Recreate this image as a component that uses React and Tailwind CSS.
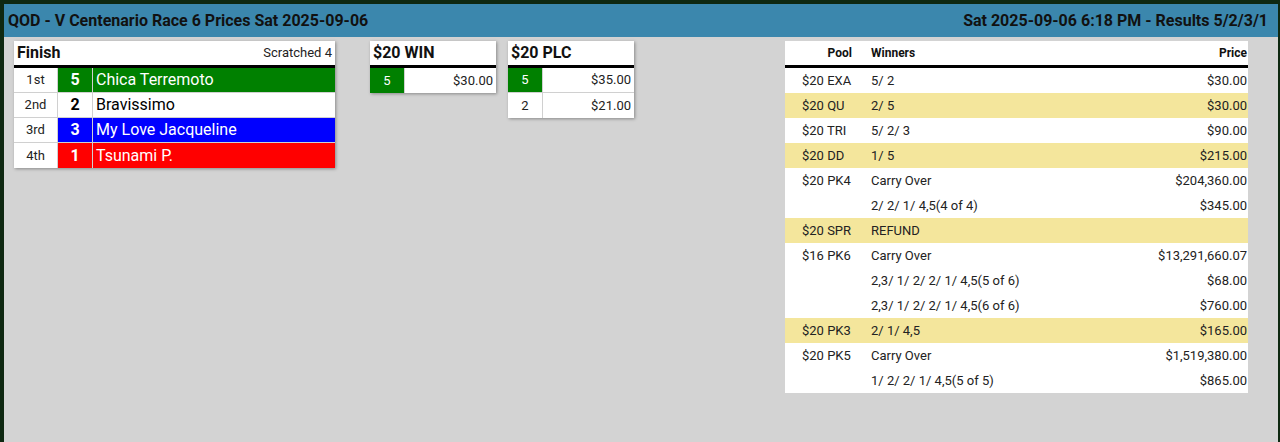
import React from "react";

const finish = [
  { pos: "1st", num: "5", name: "Chica Terremoto", bg: "bg-[#008000]", fg: "text-white" },
  { pos: "2nd", num: "2", name: "Bravissimo", bg: "bg-white", fg: "text-black" },
  { pos: "3rd", num: "3", name: "My Love Jacqueline", bg: "bg-[#0000ff]", fg: "text-white" },
  { pos: "4th", num: "1", name: "Tsunami P.", bg: "bg-[#ff0000]", fg: "text-white" },
];

const results = [
  { pool: "$20 EXA", win: "5/ 2", price: "$30.00" },
  { pool: "$20 QU", win: "2/ 5", price: "$30.00", hl: true },
  { pool: "$20 TRI", win: "5/ 2/ 3", price: "$90.00" },
  { pool: "$20 DD", win: "1/ 5", price: "$215.00", hl: true },
  { pool: "$20 PK4", win: "Carry Over", price: "$204,360.00" },
  { pool: "", win: "2/ 2/ 1/ 4,5(4 of 4)", price: "$345.00" },
  { pool: "$20 SPR", win: "REFUND", price: "", hl: true },
  { pool: "$16 PK6", win: "Carry Over", price: "$13,291,660.07" },
  { pool: "", win: "2,3/ 1/ 2/ 2/ 1/ 4,5(5 of 6)", price: "$68.00" },
  { pool: "", win: "2,3/ 1/ 2/ 2/ 1/ 4,5(6 of 6)", price: "$760.00" },
  { pool: "$20 PK3", win: "2/ 1/ 4,5", price: "$165.00", hl: true },
  { pool: "$20 PK5", win: "Carry Over", price: "$1,519,380.00" },
  { pool: "", win: "1/ 2/ 2/ 1/ 4,5(5 of 5)", price: "$865.00" },
];

function PriceCard({ title, rows, className }) {
  return (
    <div className={`w-[126px] bg-white shadow-[1px_1px_3px_rgba(0,0,0,0.35)] ${className}`}>
      <div className="h-[27px] px-[3px] flex items-center border-b-[3px] border-black text-[16px] font-bold text-[#111]">
        {title}
      </div>
      {rows.map((r, i) => (
        <div key={i} className="flex h-[25px] border-b border-[#d0d0d0] last:border-b-0 text-[13px]">
          <div
            className={`w-[35px] flex items-center justify-center border-r border-[#d0d0d0] ${
              r.first ? "bg-[#008000] text-white" : "text-[#222]"
            }`}
          >
            {r.num}
          </div>
          <div className="flex-1 flex items-center justify-end pr-[3px] text-[#222]">{r.price}</div>
        </div>
      ))}
    </div>
  );
}

export default function App() {
  return (
    <div
      className="w-[1280px] h-[442px] bg-[#0e2811] pt-[4px] pl-[4px] pr-[2px] overflow-hidden"
      style={{ fontFamily: "Roboto, 'Liberation Sans', sans-serif" }}
    >
      <div className="h-full bg-[#d3d3d3] flex flex-col">
        <div className="h-[33px] bg-[#3b87ad] flex items-center justify-between pl-[4px] pr-[10px] text-[16px] font-bold text-[#111]">
          <span>QOD - V Centenario Race 6 Prices Sat 2025-09-06</span>
          <span>Sat 2025-09-06 6:18 PM - Results 5/2/3/1</span>
        </div>

        <div className="flex items-start pt-[4px] pl-[10px]">
          <div className="w-[321px] bg-white shadow-[1px_1px_3px_rgba(0,0,0,0.35)]">
            <div className="h-[27px] px-[3px] flex items-center justify-between border-b-[3px] border-black">
              <span className="text-[16px] font-bold text-[#111]">Finish</span>
              <span className="text-[13px] text-[#222]">Scratched 4</span>
            </div>
            {finish.map((f) => (
              <div key={f.pos} className="flex h-[25px] border-b border-[#d0d0d0] last:border-b-0">
                <div className="w-[44px] flex items-center justify-center text-[13px] text-[#222] border-r border-[#d0d0d0] bg-white">
                  {f.pos}
                </div>
                <div
                  className={`w-[35px] flex items-center justify-center text-[16px] font-bold border-r border-[#d0d0d0] ${f.bg} ${f.fg}`}
                >
                  {f.num}
                </div>
                <div className={`flex-1 flex items-center pl-[3px] text-[16px] ${f.bg} ${f.fg}`}>{f.name}</div>
              </div>
            ))}
          </div>

          <PriceCard
            title="$20 WIN"
            className="ml-[35px]"
            rows={[{ num: "5", price: "$30.00", first: true }]}
          />
          <PriceCard
            title="$20 PLC"
            className="ml-[12px]"
            rows={[
              { num: "5", price: "$35.00", first: true },
              { num: "2", price: "$21.00" },
            ]}
          />

          <div className="ml-[151px] w-[463px] bg-white">
            <div className="flex h-[27px] items-center border-b-[3px] border-black text-[12px] font-bold text-[#111]">
              <div className="w-[75px] text-right pr-[8px]">Pool</div>
              <div className="flex-1 pl-[11px]">Winners</div>
              <div className="pr-[1px]">Price</div>
            </div>
            {results.map((r, i) => (
              <div
                key={i}
                className={`flex h-[25px] items-center text-[13px] text-[#222] ${r.hl ? "bg-[#f4e69c]" : "bg-white"}`}
              >
                <div className="w-[75px] pl-[17px]">{r.pool}</div>
                <div className="flex-1 pl-[11px]">{r.win}</div>
                <div className="pr-[1px]">{r.price}</div>
              </div>
            ))}
          </div>
        </div>
      </div>
    </div>
  );
}
